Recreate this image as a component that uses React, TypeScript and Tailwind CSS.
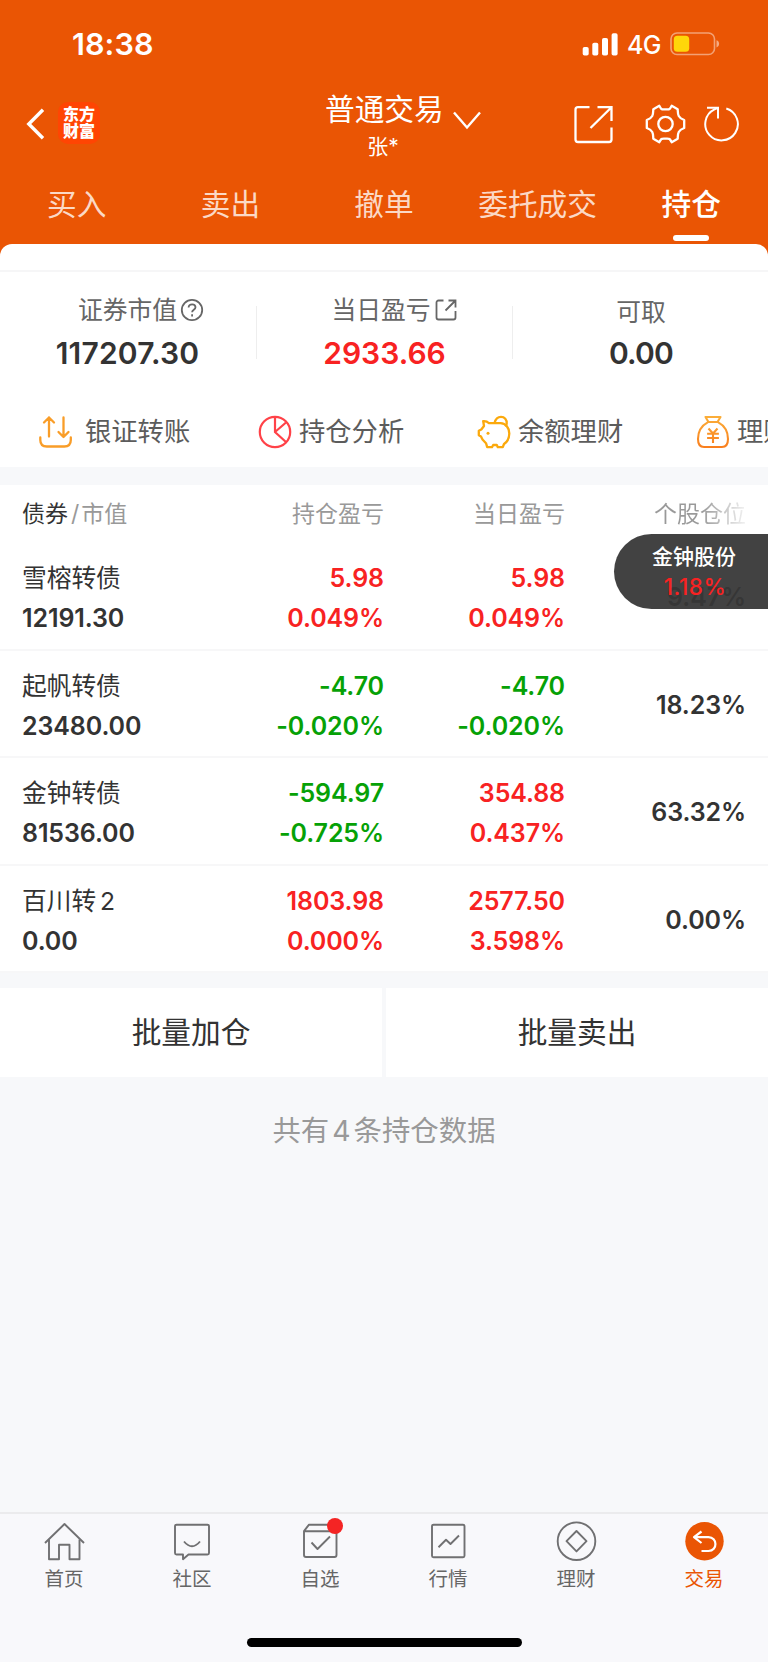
import type { ReactNode } from "react";

type Tone = "up" | "down";

interface Holding {
  name: string;
  suffix?: string;
  value: string;
  total: [string, string];
  totalTone: Tone;
  today: [string, string];
  todayTone: Tone;
  share: string;
}

const holdings: Holding[] = [
  { name: "雪榕转债", value: "12191.30", total: ["5.98", "0.049%"], totalTone: "up", today: ["5.98", "0.049%"], todayTone: "up", share: "9.47%" },
  { name: "起帆转债", value: "23480.00", total: ["-4.70", "-0.020%"], totalTone: "down", today: ["-4.70", "-0.020%"], todayTone: "down", share: "18.23%" },
  { name: "金钟转债", value: "81536.00", total: ["-594.97", "-0.725%"], totalTone: "down", today: ["354.88", "0.437%"], todayTone: "up", share: "63.32%" },
  { name: "百川转", suffix: "2", value: "0.00", total: ["1803.98", "0.000%"], totalTone: "up", today: ["2577.50", "3.598%"], todayTone: "up", share: "0.00%" },
];

const tabs = ["买入", "卖出", "撤单", "委托成交", "持仓"];

const toneClass: Record<Tone, string> = {
  up: "text-[#f82222]",
  down: "text-[#06a106]",
};

function StatusBar() {
  return (
    <div className="flex h-[88px] items-center pl-[72px] pr-[48px]">
      <span className="text-[30.5px] font-semibold leading-none tracking-[0.1px]">18:38</span>
      <div className="ml-auto flex items-center">
        <svg width="36" height="23" viewBox="0 0 36 23" fill="#fff">
          <rect x="0.7" y="14" width="6" height="8.5" rx="1.8" />
          <rect x="10.3" y="9.8" width="6" height="12.7" rx="1.8" />
          <rect x="20" y="5" width="6" height="17.5" rx="1.8" />
          <rect x="29.6" y="0.3" width="6" height="22.2" rx="1.8" />
        </svg>
        <span className="ml-[9px] mt-[2px] w-[43px] text-[25px] font-medium leading-none tracking-[-0.6px]">4G</span>
        <svg width="50" height="24" viewBox="0 0 50 24" fill="none">
          <rect x="1" y="1" width="43.5" height="21.5" rx="6" stroke="#fff" strokeOpacity="0.45" strokeWidth="1.6" />
          <rect x="3.8" y="3.8" width="15.4" height="16" rx="3.6" fill="#ffd60a" />
          <path d="M46.5 8.2c1.7.5 2.6 1.9 2.6 3.6s-.9 3.1-2.6 3.6z" fill="#fff" fillOpacity="0.5" />
        </svg>
      </div>
    </div>
  );
}

function NavBar() {
  return (
    <div className="flex h-[80px] items-start">
      <svg className="ml-[26px] mt-[20px]" width="19" height="32" viewBox="0 0 19 32" fill="none" stroke="#fff" strokeWidth="3.4">
        <path d="M17 1.8 2.8 16 17 30.2" />
      </svg>
      <div className="ml-[13px] mt-[14px] flex h-[42px] w-[42px] flex-col justify-center rounded-[10px] bg-[#ff4503] text-center text-[16px] font-black leading-[17.5px]">
        <span>东方</span>
        <span>财富</span>
      </div>
      <div className="ml-[225px] mt-[5px] w-[116px]">
        <div className="whitespace-nowrap text-[29.7px] leading-[33px]">普通交易</div>
        <div className="mt-[9px] text-center text-[21px] leading-[24px]">张*</div>
      </div>
      <svg className="ml-[11px] mt-[22px]" width="30" height="20" viewBox="0 0 30 20" fill="none" stroke="#fff" strokeWidth="2.4">
        <path d="M2 2.5 15 17.5 28 2.5" />
      </svg>
      <svg className="ml-[91px] mt-[17px]" width="40" height="40" viewBox="0 0 40 40" fill="none" stroke="#fff" strokeWidth="2.3">
        <path d="M16.5 2.2H5A2.5 2.5 0 0 0 2.5 4.7V34.5A2.5 2.5 0 0 0 5 37H36A2.5 2.5 0 0 0 38.5 34.5V22.5" />
        <path d="M24.5 2.2H38.5V16M38 2.7 17.5 23" />
      </svg>
      <svg className="ml-[31px] mt-[16px]" width="42" height="40" viewBox="-21.5 -20 42 40" fill="none" stroke="#fff" strokeWidth="2.3" strokeLinejoin="round">
        <path d="M-6.2-18.2C-4-14-4-14.6 0-14.6C4-14.6 4-14 6.2-18.2L12.2-14.8C12.500-10 11.800-6.500 18.700-4V4C11.800 6.500 12.500 10 12.200 14.800L6.200 18.200C4 14 4 14.600 0 14.600C-4 14.600-4 14-6.200 18.200L-12.200 14.800C-12.500 10-11.800 6.500-18.700 4V-4C-11.800-6.500-12.500-10-12.200-14.800Z" />
        <circle r="7.2" />
      </svg>
      <svg className="ml-[18px] mt-[17px]" width="38" height="38" viewBox="0 0 38 38" fill="none" stroke="#fff" strokeWidth="2">
        <path d="M22.3 3.5A16.3 16.3 0 1 1 10.500 4.400L13.500 3" />
        <path d="M3 2.8H14V13.5" />
      </svg>
    </div>
  );
}

function Tabs() {
  return (
    <div className="grid h-[76px] grid-cols-5">
      {tabs.map((tab) => {
        const active = tab === "持仓";
        return (
          <div key={tab} className={`flex flex-col items-center pt-[19px] ${active ? "font-medium text-white" : "text-[#fbd9c6]"}`}>
            <span className="whitespace-nowrap text-[29.7px] leading-[34px]">{tab}</span>
            {active && <span className="mt-[14px] h-[6px] w-[36px] rounded-full bg-white" />}
          </div>
        );
      })}
    </div>
  );
}

function Stat({ label, value, icon, className }: { label: string; value: string; icon?: ReactNode; className?: string }) {
  return (
    <div className="flex w-[255px] flex-col items-center">
      <div className={`flex items-center text-[24.8px] leading-[30px] text-[#666] ${icon ? "mt-[23px] gap-[3px]" : "mt-[25px]"}`}>
        {label}
        {icon}
      </div>
      <div className={`text-[30px] font-semibold leading-[36px] ${icon ? "mt-[10px]" : "mt-[8px]"} ${className}`}>{value}</div>
    </div>
  );
}

function Summary() {
  return (
    <div className="flex h-[124px] items-start border-t-2 border-[#f6f6f7]">
      <div className="flex w-[256px] [&>div>div:first-child]:ml-[27px]">
        <Stat
          label="证券市值"
          value="117207.30"
          className="text-[#333] tracking-[0.2px]"
          icon={
            <svg width="24" height="24" viewBox="0 0 24 24" fill="none" stroke="#666" strokeWidth="1.8">
              <circle cx="12" cy="12" r="10.2" />
              <path d="M8.6 9.6c0-2 1.5-3.3 3.5-3.3s3.4 1.2 3.4 3c0 2.4-3.4 2.6-3.4 5M12.1 16.2v2.2" />
            </svg>
          }
        />
      </div>
      <div className="mt-[34px] h-[53px] w-px bg-[#eee]" />
      <div className="flex w-[255px] [&>div>div:first-child]:ml-[20px]">
        <Stat
          label="当日盈亏"
          value="2933.66"
          className="text-[#f82222]"
          icon={
            <svg width="24" height="24" viewBox="0 0 24 24" fill="none" stroke="#666" strokeWidth="1.8">
              <path d="M9.5 2.5H4.5A2 2 0 0 0 2.5 4.5V19.5A2 2 0 0 0 4.5 21.5H19.5A2 2 0 0 0 21.5 19.5V13M14.5 2.5H21.5V9.5M21 3 11.5 12.5" />
            </svg>
          }
        />
      </div>
      <div className="mt-[34px] h-[53px] w-px bg-[#eee]" />
      <div className="flex w-[255px] pl-px">
        <Stat label="可取" value="0.00" className="text-[#333] tracking-[-0.8px]" />
      </div>
    </div>
  );
}

function TransferIcon() {
  return (
    <svg width="34" height="34" viewBox="0 0 34 34" fill="none" stroke="#f99d28" strokeWidth="2.3" strokeLinecap="round" strokeLinejoin="round">
      <path d="M2.3 22.5v2.5q0 6.5 6.5 6.5h17.5q6.5 0 6.5-6.5v-2.5" />
      <path d="M11 21.5V2.500M6 7.500l5-5 5 5M25.500 2.500v19M20.500 17l5 5 5-5" />
    </svg>
  );
}

function PieIcon() {
  return (
    <svg width="34" height="34" viewBox="0 0 34 34" fill="none" stroke="#ff4248" strokeWidth="2.2">
      <circle cx="17" cy="17" r="15.2" />
      <path d="M17 2V17L28.5 27.5M17 17 28 7.5" />
    </svg>
  );
}

function PiggyIcon() {
  return (
    <svg width="34" height="34" viewBox="0 0 34 34" fill="none" stroke="#fba90c" strokeWidth="2.3" strokeLinejoin="round">
      <path d="M6.2 6.2C8.5 6 10.5 6.7 12 8.2H23.5C29 8.5 32.3 13 32.3 18.5C32.3 23.5 30 27 27 29L25.8 32.2H20.8L19.8 30H16.2L15 32.2H10.2L9 28.2L5.5 24.5L4 21.5L1.8 20.3V15.8L4.3 14.5L7 11Z" />
      <path d="M17.5 8C18.5 4 21 1.8 24 1.8C27.5 1.8 30 4.5 29.7 8.5Q29.5 10 28.7 11.5" />
      <circle cx="11" cy="18.2" r="1.5" fill="#fba90c" stroke="none" />
    </svg>
  );
}

function MoneyBagIcon() {
  return (
    <svg width="34" height="34" viewBox="0 0 34 34" fill="none" stroke="url(#bag)" strokeWidth="2.1" strokeLinejoin="round">
      <defs>
        <linearGradient id="bag" x1="0" y1="0" x2="0" y2="34" gradientUnits="userSpaceOnUse">
          <stop stopColor="#fbb03a" />
          <stop offset="1" stopColor="#f97c1c" />
        </linearGradient>
      </defs>
      <path d="M9.5 2H24.5L21.5 7H12.5ZM12 7.2C6 10.500 2 16 2 24Q2 32 8 32H26Q32 32 32 24C32 16 28 10.500 22 7.200" />
      <path d="M12.5 13.5 17 18.5 21.5 13.5M17 18.5V28M11.1 18.8H22.9M11.1 23H22.9" />
    </svg>
  );
}

function Actions() {
  return (
    <div className="flex h-[73px] overflow-hidden pt-[2px] text-[26.3px] leading-[30px] text-[#5c5c5c]">
      <div className="flex w-[220px] shrink-0 items-center pl-[38px]">
        <TransferIcon />
        <span className="ml-[13px]">银证转账</span>
      </div>
      <div className="flex w-[219px] shrink-0 items-center pl-[38px]">
        <PieIcon />
        <span className="ml-[7px]">持仓分析</span>
      </div>
      <div className="flex w-[219px] shrink-0 items-center pl-[38px]">
        <PiggyIcon />
        <span className="ml-[7px]">余额理财</span>
      </div>
      <div className="flex w-[219px] shrink-0 items-center pl-[38px]">
        <MoneyBagIcon />
        <span className="ml-[7px]">理财产品</span>
      </div>
    </div>
  );
}

function HoldingRow({ item }: { item: Holding }) {
  return (
    <div className="grid h-[107.5px] grid-cols-[180px_182px_181px_181px] border-b-2 border-[#f7f7f8] pl-[22px] text-[25px] font-semibold leading-[30px] tracking-[-0.1px]">
      <div className="flex flex-col gap-[10px] pt-[20px] text-[#333]">
        <span className="text-[24.7px] font-normal tracking-normal">
          {item.name}
          {item.suffix && <span className="ml-[4px]">{item.suffix}</span>}
        </span>
        <span>{item.value}</span>
      </div>
      <div className={`flex flex-col items-end gap-[10px] pt-[20px] ${toneClass[item.totalTone]}`}>
        <span>{item.total[0]}</span>
        <span>{item.total[1]}</span>
      </div>
      <div className={`flex flex-col items-end gap-[10px] pt-[20px] ${toneClass[item.todayTone]}`}>
        <span>{item.today[0]}</span>
        <span>{item.today[1]}</span>
      </div>
      <div className="pt-[39px] text-right text-[#333]">{item.share}</div>
    </div>
  );
}

function HoldingsTable() {
  return (
    <div className="relative bg-white">
      <div className="grid h-[58px] grid-cols-[180px_182px_181px_181px] pl-[22px] pt-[14px] text-[23px] leading-[30px] text-[#999]">
        <div className="flex">
          <span className="text-[#333]">债券</span>
          <span className="ml-[3px] mr-[2px]">/</span>
          <span>市值</span>
        </div>
        <div className="text-right">持仓盈亏</div>
        <div className="text-right">当日盈亏</div>
        <div className="bg-linear-to-r from-[#999] from-75% to-[#f3f3f3] bg-clip-text text-right text-transparent">个股仓位</div>
      </div>
      {holdings.map((item) => (
        <HoldingRow key={item.name} item={item} />
      ))}
      {/* floating ticker, the cell below it shines through a little */}
      <div className="absolute right-0 top-[49px] flex h-[75px] w-[154px] flex-col rounded-l-full bg-[#363636]/94 pl-[38px] pt-[9px] text-[21px]">
        <span className="font-medium leading-[28px] text-white">金钟股份</span>
        <span className="mt-px w-[86px] text-center text-[22.5px] font-medium leading-[30px] tracking-[0.5px] text-[#f82222]">1.18%</span>
      </div>
    </div>
  );
}

function HomeIcon() {
  return (
    <>
      <path d="M1 21 20.5 2 40 21" />
      <path d="M5 17.5V37.3H15V22.8H25.5V37.3H35.5V17.5" />
    </>
  );
}

const navItems: { label: string; icon: ReactNode }[] = [
  { label: "首页", icon: <HomeIcon /> },
  {
    label: "社区",
    icon: (
      <>
        <path d="M4.5 2.7H35.500Q37 2.700 37 4.200V31Q37 32.500 35.500 32.500H16.500L11 37.200V32.500H4.500Q3 32.500 3 31V4.200Q3 2.700 4.500 2.700Z" />
        <path d="M12 19.5Q20 29 28 19.5" />
      </>
    ),
  },
  {
    label: "自选",
    icon: (
      <>
        <path d="M4 9.2 9 2.7H32L36.5 9.2V33Q36.5 35 34.5 35H6Q4 35 4 33ZM4 9.2H36.5" />
        <path d="M11.5 20.5 17.5 27 30 14.5" />
      </>
    ),
  },
  {
    label: "行情",
    icon: (
      <>
        <rect x="4" y="2.7" width="32.5" height="32.5" rx="1.5" />
        <path d="M10.5 25.2 18 17.8 22.5 22 31 13.5" />
      </>
    ),
  },
  {
    label: "理财",
    icon: (
      <>
        <circle cx="20.5" cy="19.2" r="18.8" />
        <path d="M20.5 9 30.5 19.2 20.5 29.4 10.5 19.2Z" />
      </>
    ),
  },
  {
    label: "交易",
    icon: (
      <>
        <circle cx="20.5" cy="19.2" r="19.2" fill="#ea5504" stroke="none" />
        <path d="M17.5 9.5 10 15.2 17.5 21M10 15.2H24.5C33.5 15.2 34 29 24.5 29H17.5" stroke="#fff" strokeWidth="2.2" />
      </>
    ),
  },
];

function BottomNav() {
  return (
    <nav className="mt-auto h-[150px] border-t-2 border-[#ebebed] bg-[#f8f8fb]">
      <div className="grid grid-cols-6">
        {navItems.map(({ label, icon }) => (
          <div key={label} className={`relative flex flex-col items-center pt-[8px] ${label === "交易" ? "text-[#ea5504]" : "text-[#666]"}`}>
            <svg width="41" height="40" viewBox="0 0 41 40" fill="none" stroke="#707072" strokeWidth="1.9" strokeLinejoin="round" className="overflow-visible">
              {icon}
            </svg>
            <span className="mt-[4px] text-[19.5px] leading-[26px]">{label}</span>
            {label === "自选" && <span className="absolute left-[71px] top-[4px] h-[16px] w-[16px] rounded-full bg-[#f42424]" />}
          </div>
        ))}
      </div>
      <div className="mx-auto mt-[46px] h-[9px] w-[275px] rounded-full bg-black" />
    </nav>
  );
}

export default function App() {
  return (
    <div className="flex h-[1662px] w-[768px] flex-col overflow-hidden bg-[#f7f8fa] font-['Inter','Noto_Sans_CJK_SC',sans-serif]">
      <header className="bg-[#ea5504] text-white">
        <StatusBar />
        <NavBar />
        <Tabs />
        <div className="h-[26px] rounded-t-[12px] bg-white" />
      </header>
      <section className="bg-white">
        <Summary />
        <Actions />
      </section>
      <div className="h-[18px]" />
      <HoldingsTable />
      <div className="mt-[15px] flex h-[89px] gap-[4px] text-[29.7px] text-[#333]">
        <button className="flex-1 bg-white">批量加仓</button>
        <button className="flex-1 bg-white">批量卖出</button>
      </div>
      <p className="mt-[36px] text-center text-[28.4px] leading-[36px] text-[#999]">
        共有<span className="mx-[3px]">4</span>条持仓数据
      </p>
      <BottomNav />
    </div>
  );
}
